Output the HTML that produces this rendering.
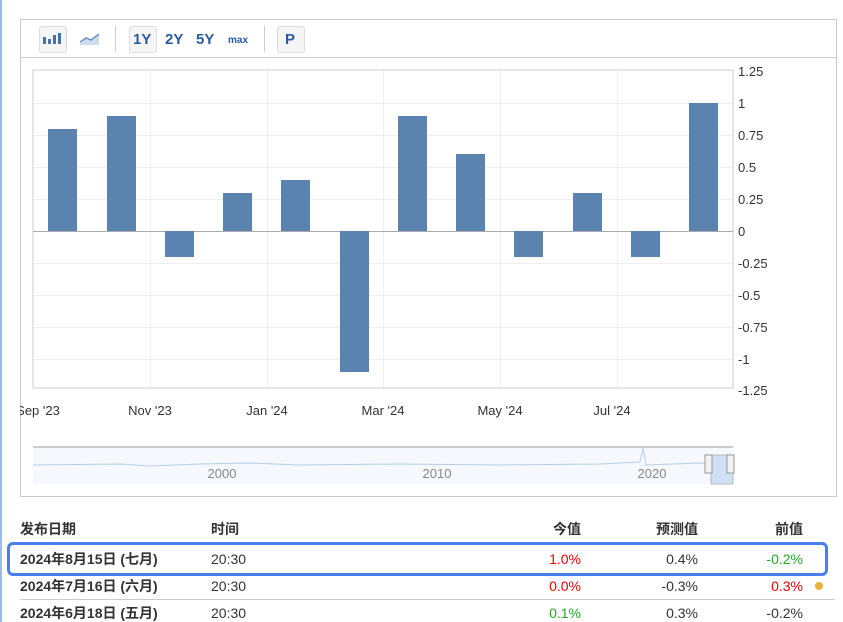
<!DOCTYPE html><html><head><style>
body{margin:0;width:843px;height:622px;background:#fff;position:relative;overflow:hidden;font-family:"Liberation Sans","Noto Sans CJK SC",sans-serif}
.a{position:absolute}
.btn{position:absolute;top:26px;width:26px;height:25px;border:1px solid #ddd;border-radius:3px;background:#f5f5f5}
.t{position:absolute;font-weight:bold;color:#2a5aa0;font-size:15px;top:31px}
.yl{position:absolute;left:738px;font-size:13px;color:#333}
.xl{position:absolute;top:403px;font-size:13px;color:#333;transform:translateX(-50%)}
.row{position:absolute;left:20px;width:800px;font-size:14px;color:#333;line-height:16px}
.row span{position:absolute;top:0;line-height:16px}
</style></head><body>
<div class="a" style="left:0;top:0;width:2px;height:622px;background:#9cbbe8"></div>
<div class="a" style="left:20px;top:19px;width:815px;height:476px;border:1px solid #c8c8c8"></div>
<div class="a" style="left:21px;top:57px;width:815px;height:1px;background:#ccc"></div>
<div class="btn" style="left:39px"></div>
<svg class="a" style="left:41px;top:30px" width="24" height="18"><rect x="2" y="7" width="3" height="7" fill="#4a72a8"/><rect x="7" y="9" width="3" height="5" fill="#4a72a8"/><rect x="12" y="5" width="3" height="9" fill="#4a72a8"/><rect x="17" y="3" width="3" height="11" fill="#4a72a8"/></svg>
<svg class="a" style="left:78px;top:30px" width="24" height="18"><path d="M2 12 L8 8 L13 10 L21 4 L21 15 L2 15Z" fill="#cfdcec"/><path d="M2 12 L8 8 L13 10 L21 4" stroke="#6f93c0" stroke-width="1.5" fill="none"/></svg>
<div class="a" style="left:115px;top:26px;width:1px;height:26px;background:#ccc"></div>
<div class="btn" style="left:129px"></div>
<div class="t" style="left:133px">1Y</div><div class="t" style="left:165px">2Y</div><div class="t" style="left:196px">5Y</div>
<div class="t" style="left:228px;font-size:10px;top:35px">max</div>
<div class="a" style="left:264px;top:26px;width:1px;height:26px;background:#ccc"></div>
<div class="btn" style="left:277px"></div><div class="t" style="left:285px">P</div>
<svg class="a" style="left:0;top:0" width="843" height="495">
<g stroke="#eee" stroke-width="1">
<line x1="33" x2="733" y1="103.5" y2="103.5"/><line x1="33" x2="733" y1="135.5" y2="135.5"/><line x1="33" x2="733" y1="167.5" y2="167.5"/><line x1="33" x2="733" y1="199.5" y2="199.5"/><line x1="33" x2="733" y1="263.5" y2="263.5"/><line x1="33" x2="733" y1="295.5" y2="295.5"/><line x1="33" x2="733" y1="327.5" y2="327.5"/><line x1="33" x2="733" y1="359.5" y2="359.5"/>
<line x1="150.5" x2="150.5" y1="70" y2="388"/><line x1="267.5" x2="267.5" y1="70" y2="388"/><line x1="383.5" x2="383.5" y1="70" y2="388"/><line x1="500.5" x2="500.5" y1="70" y2="388"/><line x1="617.5" x2="617.5" y1="70" y2="388"/>
</g>
<rect x="33" y="70" width="700" height="318" fill="none" stroke="#ccc"/>
<line x1="33" x2="733" y1="231.5" y2="231.5" stroke="#aaa"/>
<g fill="#5b83b0">
<rect x="48" y="129" width="29" height="102"/><rect x="107" y="116" width="29" height="115"/><rect x="165" y="231" width="29" height="26"/><rect x="223" y="193" width="29" height="38"/><rect x="281" y="180" width="29" height="51"/><rect x="340" y="231" width="29" height="141"/><rect x="398" y="116" width="29" height="115"/><rect x="456" y="154" width="29" height="77"/><rect x="514" y="231" width="29" height="26"/><rect x="573" y="193" width="29" height="38"/><rect x="631" y="231" width="29" height="26"/><rect x="689" y="103" width="29" height="128"/>
</g>
<rect x="33" y="446" width="700" height="38" fill="#f5f8fc"/>
<line x1="33" x2="733" y1="447" y2="447" stroke="#ccc" stroke-width="2"/>
<path d="M33 465 L120 464 L150 466 L200 464 L250 463 L300 465 L400 464 L500 465 L600 464 L640 462 L643 448 L646 465 L700 463 L733 465" stroke="#b8cde6" fill="none"/>
<rect x="711" y="455" width="22" height="29" fill="#cfe0f5" stroke="#bbb"/>
<rect x="705" y="455" width="7" height="18" fill="#f2f2f2" stroke="#999"/><rect x="727" y="455" width="7" height="18" fill="#f2f2f2" stroke="#999"/>
</svg>
<div class="yl" style="top:64px">1.25</div><div class="yl" style="top:96px">1</div><div class="yl" style="top:128px">0.75</div><div class="yl" style="top:160px">0.5</div><div class="yl" style="top:192px">0.25</div><div class="yl" style="top:224px">0</div><div class="yl" style="top:256px">-0.25</div><div class="yl" style="top:288px">-0.5</div><div class="yl" style="top:320px">-0.75</div><div class="yl" style="top:352px">-1</div><div class="yl" style="top:383px">-1.25</div>
<div class="xl" style="left:38px">Sep '23</div><div class="xl" style="left:150px">Nov '23</div><div class="xl" style="left:267px">Jan '24</div><div class="xl" style="left:383px">Mar '24</div><div class="xl" style="left:500px">May '24</div><div class="xl" style="left:612px">Jul '24</div>
<div class="a" style="left:0;top:0;width:20px;height:420px;background:#fff"></div>
<div class="a" style="left:0;top:0;width:2px;height:622px;background:#9cbbe8"></div>
<div class="xl" style="left:222px;top:466px;color:#888">2000</div><div class="xl" style="left:437px;top:466px;color:#888">2010</div><div class="xl" style="left:652px;top:466px;color:#888">2020</div>
<div class="row" style="top:521px;font-weight:bold"><span style="left:0">发布日期</span><span style="left:191px">时间</span><span style="right:239px">今值</span><span style="right:122px">预测值</span><span style="right:17px">前值</span></div>
<div class="a" style="left:7px;top:542px;width:815px;height:28px;border:3px solid #4a7ef0;border-radius:6px"></div>
<div class="row" style="top:551px"><span style="left:0;font-weight:bold">2024年8月15日 (七月)</span><span style="left:191px">20:30</span><span style="right:239px;color:#e00">1.0%</span><span style="right:122px">0.4%</span><span style="right:17px;color:#2a2">-0.2%</span></div>
<div class="a" style="left:20px;top:599px;width:815px;height:1px;background:#ccc"></div>
<div class="row" style="top:578px"><span style="left:0;font-weight:bold">2024年7月16日 (六月)</span><span style="left:191px">20:30</span><span style="right:239px;color:#e00">0.0%</span><span style="right:122px">-0.3%</span><span style="right:17px;color:#e00">0.3%</span></div>
<div class="a" style="left:815px;top:582px;width:8px;height:8px;border-radius:50%;background:#e8b040"></div>
<div class="row" style="top:605px"><span style="left:0;font-weight:bold">2024年6月18日 (五月)</span><span style="left:191px">20:30</span><span style="right:239px;color:#2a2">0.1%</span><span style="right:122px">0.3%</span><span style="right:17px">-0.2%</span></div>
</body></html>
